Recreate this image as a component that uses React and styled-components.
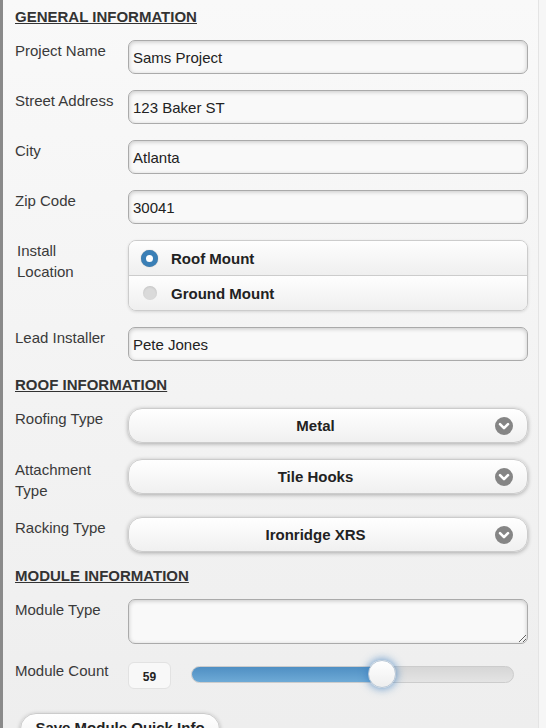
import React from "react";
import styled, { createGlobalStyle } from "styled-components";

const GlobalStyle = createGlobalStyle`
  html, body {
    margin: 0;
    padding: 0;
    height: 100%;
    overflow: hidden;
  }
  body {
    font-family: "Liberation Sans", Arial, sans-serif;
    color: #333;
  }
`;

const Page = styled.div`
  display: flex;
  height: 728px;
  overflow: hidden;
  background: linear-gradient(#f9f9f9, #eeeeee);
  border-left: 3px solid #8a8a8a;
  box-sizing: border-box;
`;

const Content = styled.div`
  flex: 1;
  padding: 6px 10px 0 12px;
`;

const Gutter = styled.div`
  width: 7px;
  border-left: 1px solid #e4e4e4;
  background: #f6f6f6;
`;

const Section = styled.section`
  & + & {
    margin-top: 13px;
  }
`;

const Heading = styled.h2`
  margin: 0 0 13px;
  font-size: 15px;
  line-height: 21px;
  font-weight: bold;
  text-transform: uppercase;
  text-decoration: underline;
  color: #333;
`;

const Fields = styled.div`
  display: flex;
  flex-direction: column;
  gap: 16px;
`;

const Row = styled.div`
  display: flex;
  align-items: flex-start;
`;

const Label = styled.label`
  flex: 0 0 113px;
  box-sizing: border-box;
  padding-left: ${(p) => (p.$legend ? "2px" : "0")};
  padding-right: ${(p) => (p.$legend ? "40px" : "7px")};
  font-size: 15px;
  line-height: 21px;
  color: #3a3a3a;
`;

const TextInput = styled.input`
  flex: 1;
  height: 34px;
  box-sizing: border-box;
  border: 1px solid #aaa;
  border-radius: 7px;
  background: #f9f9f9;
  box-shadow: inset 0 1px 4px rgba(0, 0, 0, 0.2);
  padding: 0 4px;
  font-family: inherit;
  font-size: 15px;
  color: #222;
  outline: none;
`;

const TextArea = styled.textarea`
  flex: 1;
  height: 45px;
  box-sizing: border-box;
  border: 1px solid #aaa;
  border-radius: 7px;
  background: #f9f9f9;
  box-shadow: inset 0 1px 4px rgba(0, 0, 0, 0.2);
  padding: 4px;
  font-family: inherit;
  font-size: 15px;
  outline: none;
`;

const RadioGroup = styled.div`
  flex: 1;
  border: 1px solid #ccc;
  border-radius: 8px;
  overflow: hidden;
  box-shadow: 0 1px 3px rgba(0, 0, 0, 0.12);
`;

const Option = styled.div`
  display: flex;
  align-items: center;
  gap: 13px;
  height: 34px;
  padding-left: 12px;
  background: linear-gradient(#fefefe, #efefef);
  font-size: 15px;
  font-weight: bold;
  color: #222;

  & + & {
    border-top: 1px solid #ccc;
  }
`;

const RadioMark = styled.span`
  width: 17px;
  height: 17px;
  display: flex;
  align-items: center;
  justify-content: center;

  &::before {
    content: "";
    box-sizing: border-box;
    border-radius: 50%;
    width: ${(p) => (p.$on ? "17px" : "14px")};
    height: ${(p) => (p.$on ? "17px" : "14px")};
    background: ${(p) => (p.$on ? "#fff" : "#dadada")};
    border: ${(p) => (p.$on ? "5px solid #3a7fb6" : "none")};
    box-shadow: ${(p) => (p.$on ? "0 0 1px rgba(0,0,0,.4)" : "inset 0 1px 2px rgba(0,0,0,.1)")};
  }
`;

const Select = styled.div`
  flex: 1;
  position: relative;
  height: 35px;
  box-sizing: border-box;
  display: flex;
  align-items: center;
  justify-content: center;
  padding: 0 40px 0 15px;
  border: 1px solid #ccc;
  border-radius: 14px;
  background: linear-gradient(#ffffff, #f0f0f0);
  box-shadow: 0 1px 4px rgba(0, 0, 0, 0.3);
  font-size: 15px;
  font-weight: bold;
  color: #222;
`;

const Arrow = styled.svg`
  position: absolute;
  right: 14px;
  top: 50%;
  margin-top: -9px;
`;

const CountBox = styled.div`
  width: 43px;
  height: 27px;
  margin-top: 2px;
  box-sizing: border-box;
  border: 1px solid #e2e2e2;
  border-radius: 6px;
  background: #f8f8f8;
  display: flex;
  align-items: center;
  justify-content: center;
  font-size: 12px;
  font-weight: bold;
  color: #222;
  padding-top: 2px;
`;

const Slider = styled.div`
  position: relative;
  flex: 0 0 323px;
  margin-left: 20px;
  height: 28px;
  display: flex;
  align-items: center;
`;

const Track = styled.div`
  position: relative;
  width: 100%;
  height: 17px;
  box-sizing: border-box;
  border: 1px solid #ccc;
  border-radius: 9px;
  background: linear-gradient(#d6d6d6, #e4e4e4);
  overflow: hidden;
`;

const Fill = styled.div`
  height: 100%;
  background: linear-gradient(#4f8fc3, #6eaad6);
`;

const Thumb = styled.div`
  position: absolute;
  top: 0;
  width: 28px;
  height: 28px;
  margin-left: -14px;
  box-sizing: border-box;
  border-radius: 50%;
  border: 1px solid #b8c8d8;
  background: linear-gradient(#ffffff, #eeeeee);
  box-shadow: 0 0 8px 1px rgba(56, 123, 190, 0.7);
`;

const Button = styled.button`
  margin: 24px 0 0 5px;
  width: 200px;
  padding: 4px 8px 12px;
  border: 1px solid #ccc;
  border-radius: 16px;
  background: linear-gradient(#ffffff, #f0f0f0);
  box-shadow: 0 1px 4px rgba(0, 0, 0, 0.25);
  font-family: inherit;
  font-size: 15px;
  line-height: 20px;
  font-weight: bold;
  white-space: nowrap;
  color: #222;
`;

const DropIcon = () => (
  <Arrow width="18" height="18" viewBox="0 0 18 18">
    <circle cx="9" cy="9" r="9" fill="#858585" />
    <path d="M5 7.2 L9 11.2 L13 7.2" fill="none" stroke="#fff" strokeWidth="2.6" strokeLinecap="round" strokeLinejoin="round" />
  </Arrow>
);

const Field = ({ label, value }) => (
  <Row>
    <Label>{label}</Label>
    <TextInput defaultValue={value} />
  </Row>
);

const SelectField = ({ label, value }) => (
  <Row>
    <Label>{label}</Label>
    <Select>
      {value}
      <DropIcon />
    </Select>
  </Row>
);

const moduleCount = 59;

export default function App() {
  return (
    <>
      <GlobalStyle />
      <Page>
        <Content>
          <Section>
            <Heading>General Information</Heading>
            <Fields>
              <Field label="Project Name" value="Sams Project" />
              <Field label="Street Address" value="123 Baker ST" />
              <Field label="City" value="Atlanta" />
              <Field label="Zip Code" value="30041" />
              <Row>
                <Label $legend>Install Location</Label>
                <RadioGroup>
                  <Option>
                    <RadioMark $on />
                    Roof Mount
                  </Option>
                  <Option>
                    <RadioMark />
                    Ground Mount
                  </Option>
                </RadioGroup>
              </Row>
              <Field label="Lead Installer" value="Pete Jones" />
            </Fields>
          </Section>

          <Section>
            <Heading>Roof Information</Heading>
            <Fields>
              <SelectField label="Roofing Type" value="Metal" />
              <SelectField label="Attachment Type" value="Tile Hooks" />
              <SelectField label="Racking Type" value="Ironridge XRS" />
            </Fields>
          </Section>

          <Section>
            <Heading>Module Information</Heading>
            <Fields>
              <Row>
                <Label>Module Type</Label>
                <TextArea />
              </Row>
              <Row>
                <Label>Module Count</Label>
                <CountBox>{moduleCount}</CountBox>
                <Slider>
                  <Track>
                    <Fill style={{ width: `${moduleCount}%` }} />
                  </Track>
                  <Thumb style={{ left: `${moduleCount}%` }} />
                </Slider>
              </Row>
            </Fields>
          </Section>

          <Button>Save Module Quick Info</Button>
        </Content>
        <Gutter />
      </Page>
    </>
  );
}
